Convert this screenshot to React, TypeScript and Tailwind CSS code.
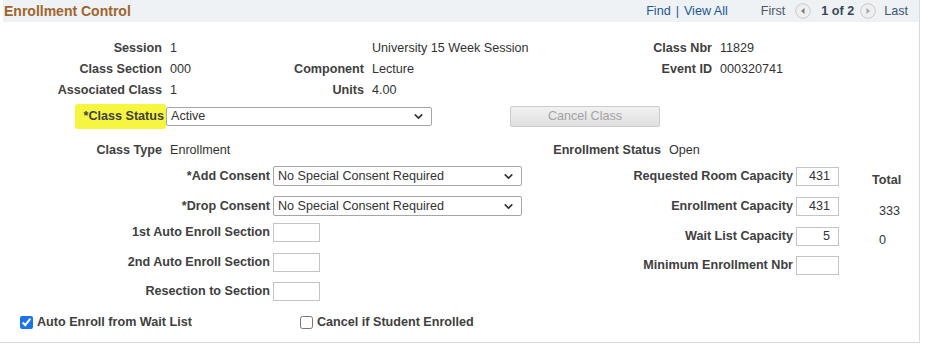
import { ChevronDown } from "lucide-react";

const font = { fontFamily: '"Liberation Sans", Arial, sans-serif' };

function NavCircle({ dir }: { dir: "left" | "right" }) {
    return (
        <svg width="16" height="16" viewBox="0 0 16 16">
            <circle cx="8" cy="8" r="7.3" fill="#efefef" stroke="#c9c9c9" />
            {dir === "left" ? (
                <path d="M9.5 5 L6 8 L9.5 11 Z" fill="#7a7a7a" />
            ) : (
                <path d="M6.5 5 L10 8 L6.5 11 Z" fill="#9aa7b8" />
            )}
        </svg>
    );
}

function SelectBox({ value, width, height }: { value: string; width: string; height: string }) {
    return (
        <div
            className={`${width} ${height} flex items-center justify-between border border-[#a6a6a6] rounded-[2px] bg-white pl-[4px] pr-[6px] text-[#333]`}
        >
            <span>{value}</span>
            <ChevronDown size={13} strokeWidth={3} className="text-[#333]" />
        </div>
    );
}

function TextBox({ value = "", width = "w-[47px]" }: { value?: string; width?: string }) {
    return (
        <div
            className={`${width} h-[19px] border border-[#c4c4c4] bg-white flex items-center justify-end pr-[8px] text-[#333]`}
        >
            {value}
        </div>
    );
}

export default function App() {
    const label = "font-bold text-[#404040]";
    const val = "text-[#333]";

    return (
        <div className="bg-white w-[926px] h-[345px]" style={font}>
            <div className="w-[920px] h-[343px] border-r border-b border-[#d6dbdf] text-[12.6px] leading-[15px]">
                {/* Header bar */}
                <div className="ml-[3px] h-[22px] bg-[#eff2f4] flex items-center justify-between pr-[11px]">
                    <span className="pl-[1px] text-[14px] font-bold text-[#a0652b]">Enrollment Control</span>
                    <div className="flex items-center text-[12.6px]">
                        <span className="text-[#22589a]">Find</span>
                        <span className="mx-[5px] text-[#22589a]">|</span>
                        <span className="text-[#22589a]">View All</span>
                        <span className="ml-[33px] text-[#4c5866]">First</span>
                        <span className="ml-[10px]">
                            <NavCircle dir="left" />
                        </span>
                        <span className="ml-[10px] font-bold text-[#38485c]">1 of 2</span>
                        <span className="ml-[6px]">
                            <NavCircle dir="right" />
                        </span>
                        <span className="ml-[8px] text-[#3a5478]">Last</span>
                    </div>
                </div>

                {/* Top info grid */}
                <div className="mt-[16px] grid grid-cols-[162px_90px_96px_220px_112px_1fr] gap-x-2 auto-rows-[21px] items-center">
                    <span className={`${label} text-right`}>Session</span>
                    <span className={val}>1</span>
                    <span></span>
                    <span className={val}>University 15 Week Session</span>
                    <span className={`${label} text-right`}>Class Nbr</span>
                    <span className={val}>11829</span>

                    <span className={`${label} text-right`}>Class Section</span>
                    <span className={val}>000</span>
                    <span className={`${label} text-right`}>Component</span>
                    <span className={val}>Lecture</span>
                    <span className={`${label} text-right`}>Event ID</span>
                    <span className={val}>000320741</span>

                    <span className={`${label} text-right`}>Associated Class</span>
                    <span className={val}>1</span>
                    <span className={`${label} text-right`}>Units</span>
                    <span className={val}>4.00</span>
                    <span></span>
                    <span></span>
                </div>

                {/* Class Status */}
                <div className="mt-[2px] h-[27px] flex items-center">
                    <div className="w-[166px] flex justify-end">
                        <span className={`${label} bg-[#f6f640] rounded-[3px] pl-[9px] pr-[2px] py-[5px]`}>
                            *Class Status
                        </span>
                    </div>
                    <SelectBox value="Active" width="w-[266px]" height="h-[19px]" />
                    <button className="ml-[78px] w-[150px] h-[21px] rounded-[2px] border border-[#cdcdcd] bg-gradient-to-b from-[#f1f1f1] to-[#e0e0e0] text-[#a3a3a3]">
                        Cancel Class
                    </button>
                </div>

                {/* Class Type */}
                <div className="mt-[10px] h-[21px] flex items-center">
                    <span className={`${label} w-[162px] text-right`}>Class Type</span>
                    <span className={`${val} ml-2 w-[200px]`}>Enrollment</span>
                    <span className={`${label} ml-2 w-[283px] text-right`}>Enrollment Status</span>
                    <span className={`${val} ml-2`}>Open</span>
                </div>

                {/* Lower section */}
                <div className="flex">
                    <div className="w-[522px]">
                        <div className="mt-[5px] h-[20px] flex items-center">
                            <span className={`${label} w-[270px] text-right`}>*Add Consent</span>
                            <div className="ml-[3px]">
                                <SelectBox value="No Special Consent Required" width="w-[249px]" height="h-[20px]" />
                            </div>
                        </div>
                        <div className="mt-[10px] h-[20px] flex items-center">
                            <span className={`${label} w-[270px] text-right`}>*Drop Consent</span>
                            <div className="ml-[3px]">
                                <SelectBox value="No Special Consent Required" width="w-[249px]" height="h-[20px]" />
                            </div>
                        </div>
                        <div className="mt-[6px] h-[20px] flex items-center">
                            <span className={`${label} w-[270px] text-right`}>1st Auto Enroll Section</span>
                            <div className="ml-[3px]">
                                <TextBox />
                            </div>
                        </div>
                        <div className="mt-[10px] h-[20px] flex items-center">
                            <span className={`${label} w-[270px] text-right`}>2nd Auto Enroll Section</span>
                            <div className="ml-[3px]">
                                <TextBox />
                            </div>
                        </div>
                        <div className="mt-[9px] h-[20px] flex items-center">
                            <span className={`${label} w-[270px] text-right`}>Resection to Section</span>
                            <div className="ml-[3px]">
                                <TextBox />
                            </div>
                        </div>
                    </div>

                    <div>
                        <div className="mt-[6px] h-[19px] flex items-center">
                            <span className={`${label} w-[271px] text-right`}>Requested Room Capacity</span>
                            <div className="ml-[3px]">
                                <TextBox value="431" width="w-[43px]" />
                            </div>
                        </div>
                        <div className="mt-[11px] h-[19px] flex items-center">
                            <span className={`${label} w-[271px] text-right`}>Enrollment Capacity</span>
                            <div className="ml-[3px]">
                                <TextBox value="431" width="w-[43px]" />
                            </div>
                        </div>
                        <div className="mt-[11px] h-[19px] flex items-center">
                            <span className={`${label} w-[271px] text-right`}>Wait List Capacity</span>
                            <div className="ml-[3px]">
                                <TextBox value="5" width="w-[43px]" />
                            </div>
                        </div>
                        <div className="mt-[10px] h-[19px] flex items-center">
                            <span className={`${label} w-[271px] text-right`}>Minimum Enrollment Nbr</span>
                            <div className="ml-[3px]">
                                <TextBox width="w-[43px]" />
                            </div>
                        </div>
                    </div>

                    <div className="ml-[33px] flex flex-col">
                        <span className={`${label} mt-[12px]`}>Total</span>
                        <span className={`${val} mt-[16px] pl-[7px]`}>333</span>
                        <span className={`${val} mt-[14px] pl-[7px]`}>0</span>
                    </div>
                </div>

                {/* Checkboxes */}
                <div className="mt-[13px] h-[16px] flex items-center pl-[20px]">
                    <label className="w-[280px] flex items-center gap-[4px]">
                        <input type="checkbox" defaultChecked className="w-[13px] h-[13px] accent-[#1a73e8]" />
                        <span className={label}>Auto Enroll from Wait List</span>
                    </label>
                    <label className="flex items-center gap-[4px]">
                        <input type="checkbox" className="w-[13px] h-[13px]" />
                        <span className={label}>Cancel if Student Enrolled</span>
                    </label>
                </div>
            </div>
        </div>
    );
}
